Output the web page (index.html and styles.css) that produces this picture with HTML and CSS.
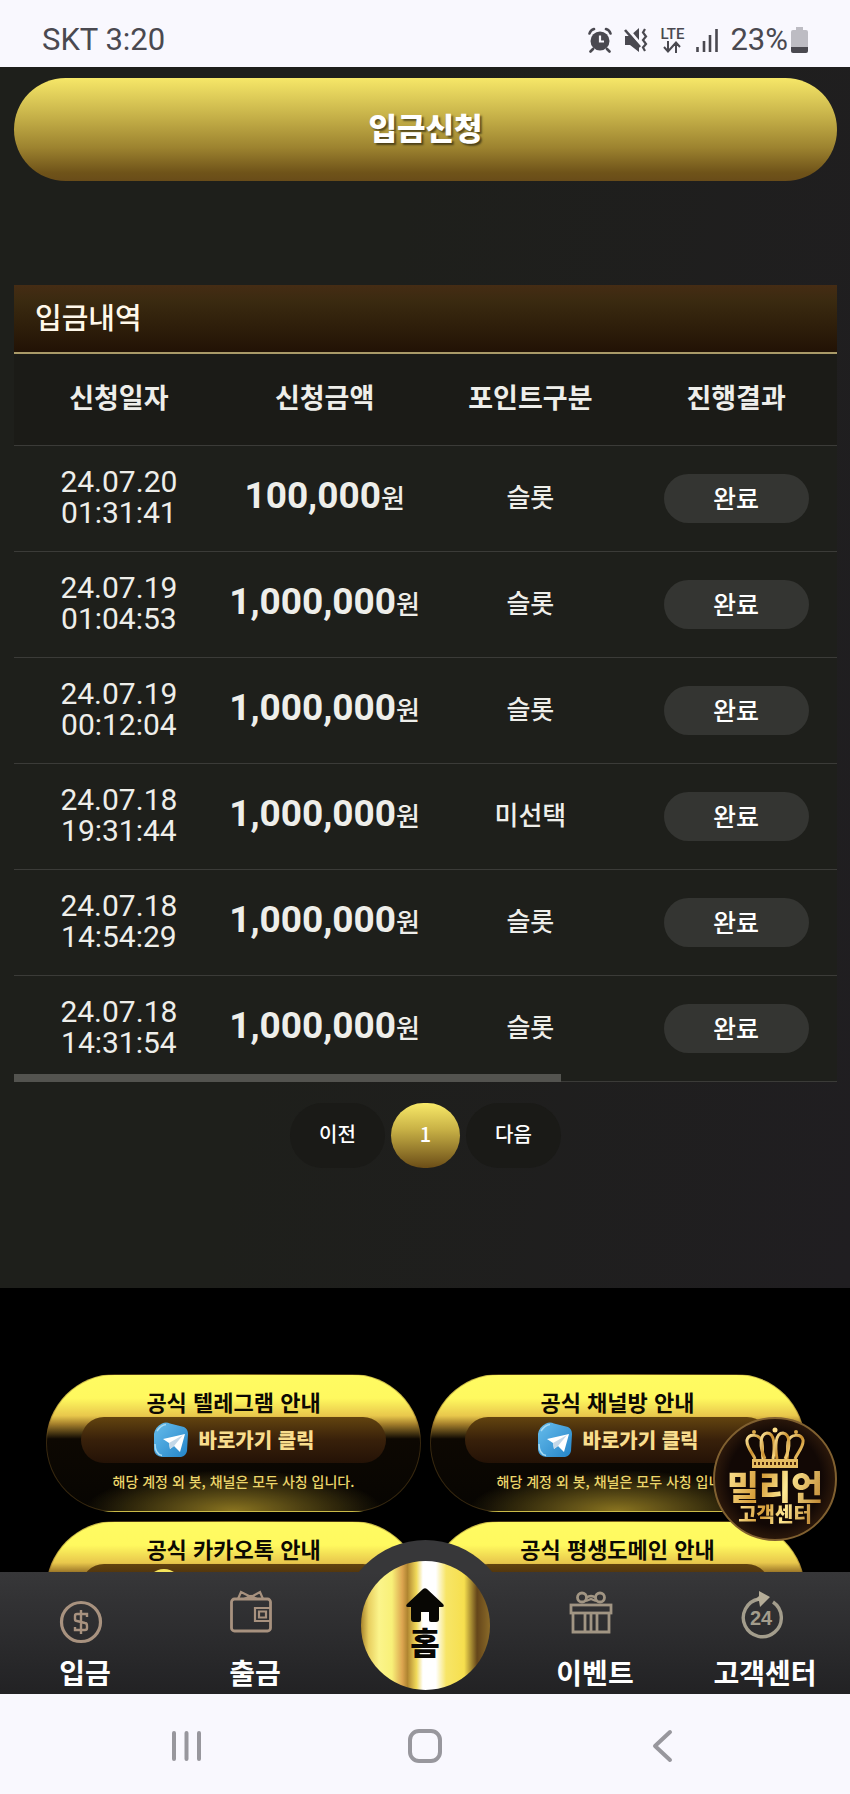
FILE: index.html
```html
<!DOCTYPE html>
<html lang="ko">
<head>
<meta charset="utf-8">
<meta name="viewport" content="width=device-width, initial-scale=1">
<title>입금신청</title>
<link rel="stylesheet" href="styles.css">
</head>
<body>
<svg class="defs" width="0" height="0" aria-hidden="true">
  <defs>
    <linearGradient id="tg" x1="0" y1="0" x2="1" y2="1"><stop offset="0" stop-color="#67bdec"/><stop offset="1" stop-color="#2484c8"/></linearGradient>
    <linearGradient id="gold" x1="0" y1="0" x2="1" y2="1"><stop offset="0" stop-color="#ffe9a0"/><stop offset=".5" stop-color="#c98f2e"/><stop offset="1" stop-color="#ffe08a"/></linearGradient>
    <symbol id="telegram" viewBox="0 0 36 36">
      <path d="M9 1.500Q13-.5 17 1.500L31 5Q35 7 35 12L34 29Q33 34 28 35L9 35Q2 34 1 28L1 12Q2 5 9 1.500Z" fill="url(#tg)"/>
      <path d="M2 22Q2 32 9 33.500M4 9Q8 3 13 2.500" fill="none" stroke="#a9dcf5" stroke-width="1.500"/>
      <path d="M10 17L32 12L27 30L21 24L17 27L16 21Z" fill="#fff"/>
      <path d="M16 21L30 13L21 24L17 27Z" fill="#c4d8e8"/>
    </symbol>
  </defs>
</svg>

<header class="status">
  <span class="status-text">SKT 3:20</span>
  <div class="status-icons">
    <svg width="24" height="26" viewBox="0 0 24 26" aria-hidden="true"><circle cx="12" cy="14" r="9.500" fill="#4a4950"/><path d="M1.500 6.500Q2.500 3 6 2M22.500 6.500Q21.500 3 18 2M5 22L2.500 24.500M19 22L21.500 24.500" stroke="#4a4950" stroke-width="2.600" stroke-linecap="round" fill="none"/><path d="M12 8.500V14.500H16" stroke="#f9f8fe" stroke-width="2.200" fill="none"/></svg>
    <svg width="25" height="26" viewBox="0 0 25 26" aria-hidden="true"><path d="M1 9H6L15 1V25L6 18H1Z" fill="#4a4950"/><path d="M2 0L18 19" stroke="#f9f8fe" stroke-width="3"/><path d="M1 3L16 20" stroke="#4a4950" stroke-width="2.600"/><path d="M21 2L19 5.500L22 9.500L19 13L22 17L19 20.500L21 24" stroke="#4a4950" stroke-width="2.200" fill="none"/></svg>
    <span class="lte">LTE<svg width="18" height="12" viewBox="0 0 18 12" aria-hidden="true"><path d="M5 0V10M1 6L5 10.500L9 6M13 12V2M9 6L13 1.500L17 6" fill="none" stroke="#4a4950" stroke-width="2"/></svg></span>
    <svg width="22" height="24" viewBox="0 0 22 24" aria-hidden="true"><path d="M1.500 19V24M8 13V24M14 7V24M20.500 1V24" stroke="#4a4950" stroke-width="2.600"/></svg>
    <span class="status-text battery">23%<svg width="17" height="26" viewBox="0 0 17 26" aria-hidden="true"><path d="M5 0H12V3H15Q17 3 17 5V20H0V5Q0 3 2 3H5Z" fill="#bdbcc3"/><path d="M0 20H17V24Q17 26 15 26H2Q0 26 0 24Z" fill="#4a4950"/></svg></span>
  </div>
</header>

<main class="content">
  <button class="submit" type="button">입금신청</button>

  <section class="history">
    <h1 class="history-title">입금내역</h1>
    <div class="table-wrap">
      <table class="table">
        <thead>
          <tr><th scope="col">신청일자</th><th scope="col">신청금액</th><th scope="col">포인트구분</th><th scope="col">진행결과</th></tr>
        </thead>
        <tbody>
          <tr><td class="date">24.07.20<br>01:31:41</td><td class="amount"><b>100,000</b>원</td><td>슬롯</td><td><span class="state">완료</span></td></tr>
          <tr><td class="date">24.07.19<br>01:04:53</td><td class="amount"><b>1,000,000</b>원</td><td>슬롯</td><td><span class="state">완료</span></td></tr>
          <tr><td class="date">24.07.19<br>00:12:04</td><td class="amount"><b>1,000,000</b>원</td><td>슬롯</td><td><span class="state">완료</span></td></tr>
          <tr><td class="date">24.07.18<br>19:31:44</td><td class="amount"><b>1,000,000</b>원</td><td>미선택</td><td><span class="state">완료</span></td></tr>
          <tr><td class="date">24.07.18<br>14:54:29</td><td class="amount"><b>1,000,000</b>원</td><td>슬롯</td><td><span class="state">완료</span></td></tr>
          <tr><td class="date">24.07.18<br>14:31:54</td><td class="amount"><b>1,000,000</b>원</td><td>슬롯</td><td><span class="state">완료</span></td></tr>
        </tbody>
      </table>
      <div class="scroll-thumb"></div>
    </div>
    <nav class="pager" aria-label="페이지">
      <button class="page" type="button">이전</button>
      <button class="page current" type="button">1</button>
      <button class="page" type="button">다음</button>
    </nav>
  </section>
</main>

<footer class="links">
  <a class="card" href="#telegram-guide">
    <span class="card-title">공식 텔레그램 안내</span>
    <span class="card-pill"><svg width="36" height="36" aria-hidden="true"><use href="#telegram"/></svg>바로가기 클릭</span>
    <span class="card-note">해당 계정 외 봇, 채널은 모두 사칭 입니다.</span>
  </a>
  <a class="card" href="#channel">
    <span class="card-title">공식 채널방 안내</span>
    <span class="card-pill"><svg width="36" height="36" aria-hidden="true"><use href="#telegram"/></svg>바로가기 클릭</span>
    <span class="card-note">해당 계정 외 봇, 채널은 모두 사칭 입니다.</span>
  </a>
  <a class="card" href="#kakao">
    <span class="card-title">공식 카카오톡 안내</span>
    <span class="card-pill kakao"><svg width="36" height="36" viewBox="0 0 36 36" aria-hidden="true"><ellipse cx="18" cy="19" rx="17" ry="16" fill="#f5e45c"/></svg></span>
  </a>
  <a class="card" href="#domain">
    <span class="card-title">공식 평생도메인 안내</span>
    <span class="card-pill"></span>
  </a>
</footer>

<a class="support" href="#support">
  <svg width="60" height="42" viewBox="0 0 60 42" aria-hidden="true"><g fill="none" stroke="url(#gold)" stroke-width="3"><path d="M10 32C8 26 1 20 2 13C4 6 15 7 17 15C18 21 17 27 18 32"/><path d="M50 32C52 26 59 20 58 13C56 6 45 7 43 15C42 21 43 27 42 32"/><path d="M20 32C14 19 15 7 22 6C30 6 30 20 28 32"/><path d="M40 32C46 19 45 7 38 6C30 6 30 20 32 32"/></g><circle cx="30" cy="3" r="2.500" fill="#ffe08a"/><circle cx="9" cy="5" r="2" fill="#dba94a"/><circle cx="51" cy="5" r="2" fill="#dba94a"/><path d="M7 32H53V41H7Z" fill="#e7bd62"/><path d="M9 36.500H51" stroke="#4a2508" stroke-width="3" stroke-dasharray="2 2"/></svg>
  <strong>밀리언</strong>
  <span>고객센터</span>
</a>

<div class="dock">
  <nav class="tabs" aria-label="메뉴">
    <a class="tab" href="#deposit"><svg class="low" width="44" height="44" viewBox="0 0 44 44" aria-hidden="true"><g fill="none" stroke="#a8927f"><circle cx="22" cy="22" r="19.500" stroke-width="3.200"/><path d="M28 17V14H18Q16 14 16 16V19Q16 21 18 21L26 23Q28 23 28 26V28Q28 30 26 30H16V27M22 10V34" stroke-width="2.400"/></g></svg><span>입금</span></a>
    <a class="tab" href="#withdraw"><svg width="44" height="44" viewBox="0 0 44 44" aria-hidden="true"><g fill="none" stroke="#a8927f" stroke-width="2.800"><rect x="2.500" y="9" width="39" height="32" rx="3"/><path d="M9 9L12 2L22 7L31 2L34 9M15 9L22 6L28 9" stroke-width="2.200"/><path d="M41 18H26V31H41M30 21.500H37V27.500H30Z" stroke-width="2.200"/></g></svg><span>출금</span></a>
    <a class="tab home" href="#home"><span class="home-disc"><svg width="40" height="34" viewBox="0 0 40 34" aria-hidden="true"><path d="M18 1Q20-.5 22 1L38 16Q40 19 37 19H34V31Q34 34 31 34H26Q24 34 24 32V24H16V32Q16 34 14 34H9Q6 34 6 31V19H3Q0 19 2 16Z" fill="#080704"/></svg><span>홈</span></span></a>
    <a class="tab" href="#event"><svg width="44" height="44" viewBox="0 0 44 44" aria-hidden="true"><g fill="none" stroke="#a19583" stroke-width="2.800"><rect x="2" y="15" width="40" height="8"/><path d="M4 23V42H40V23M16 23V42M22 23V42M28 23V42"/><circle cx="13" cy="7.500" r="4.500"/><circle cx="31" cy="7.500" r="4.500"/><path d="M17 8Q22 4 27 8M17 11L22 9L27 11" stroke-width="2.200"/></g></svg><span>이벤트</span></a>
    <a class="tab" href="#help"><svg width="44" height="50" viewBox="0 0 44 50" aria-hidden="true"><path d="M20 9A19 19 0 1 0 34 12" fill="none" stroke="#a39d8c" stroke-width="3.400"/><path d="M20 1L31 7L21 17L20 11L16 10L20 6Z" fill="#b5ad98"/><text class="icon-number" x="22" y="35" text-anchor="middle">24</text></svg><span>고객센터</span></a>
  </nav>
  <div class="system">
    <button type="button" aria-label="최근 앱"><svg width="34" height="34" viewBox="0 0 34 34"><path d="M4 4V30M16.500 4V30M29 4V30" stroke="#98979d" stroke-width="4" stroke-linecap="round"/></svg></button>
    <button type="button" aria-label="홈 화면"><svg width="34" height="34" viewBox="0 0 34 34"><rect x="2" y="2" width="30" height="30" rx="9" fill="none" stroke="#98979d" stroke-width="4"/></svg></button>
    <button type="button" aria-label="뒤로"><svg width="34" height="34" viewBox="0 0 34 34"><path d="M24 3L9 17L24 31" fill="none" stroke="#98979d" stroke-width="4" stroke-linecap="round" stroke-linejoin="round"/></svg></button>
  </div>
</div>
</body>
</html>
```
FILE: styles.css
```css
* { box-sizing: border-box; }

body {
  margin: 0;
  min-height: 100vh;
  display: flex;
  flex-direction: column;
  background: #000;
  color: #eeeeea;
  font-family: "Noto Sans CJK KR", sans-serif;
}

a { color: inherit; text-decoration: none; }
button { border: 0; padding: 0; font: inherit; color: inherit; cursor: pointer; }
svg { display: block; flex: none; }
.defs { position: absolute; }

/* status bar */
.status {
  display: flex;
  align-items: center;
  justify-content: space-between;
  height: 67px;
  padding: 13px 42px 0;
  background: #f9f8fe;
  color: #4a4950;
  font-family: Roboto, sans-serif;
}
.status-text { font-size: 31px; line-height: 36px; }
.status-icons { display: flex; align-items: center; gap: 12px; }
.lte {
  display: flex;
  flex-direction: column;
  align-items: center;
  font-size: 15px;
  font-weight: 500;
  line-height: 14px;
}
.battery { display: flex; align-items: center; gap: 3px; }

/* main */
.content {
  padding: 11px 13px 120px 14px;
  background: linear-gradient(100deg, #1e1f1b 40%, #201e21);
}
.submit {
  display: block;
  width: 100%;
  height: 103px;
  padding-bottom: 6px;
  border-radius: 52px;
  background: linear-gradient(#f6e768, #c5b048 38%, #9c822f 68%, #6f5319 92%, #694c19);
  color: #fff;
  font-size: 31px;
  font-weight: 900;
  text-shadow: 2px 2px 2px #0008;
}
.history { margin-top: 104px; }
.history-title {
  margin: 0;
  padding: 11px 21px 15px;
  border-bottom: 2px solid #a99a68;
  background: linear-gradient(#452c14, #3a2a10 25%, #221205);
  color: #fff8ea;
  font-size: 29px;
  font-weight: 500;
  line-height: 41px;
}
.table-wrap { position: relative; }
.table {
  width: 100%;
  table-layout: fixed;
  border-collapse: collapse;
  text-align: center;
  background: #1e1f1b;
}
.table th, .table td { padding: 0 0 5px 4px; border-bottom: 1px solid #3b3b38; }
.table th {
  height: 91px;
  background: #1b1b17;
  font-size: 27px;
  font-weight: 700;
}
.table td { height: 106px; font-size: 26px; font-weight: 500; }
.table .date {
  padding-bottom: 3px;
  font-family: Roboto, sans-serif;
  font-size: 30px;
  font-weight: 400;
  line-height: 31px;
}
.table .amount { padding-bottom: 3px; font-size: 26px; white-space: nowrap; line-height: 50px; }
.amount b { font-family: Roboto, sans-serif; font-size: 37px; font-weight: 700; }
.table td:last-child { padding-bottom: 0; }
.state {
  display: inline-block;
  width: 145px;
  padding-bottom: 3px;
  border-radius: 25px;
  background: #343532;
  color: #fff;
  font-size: 25px;
  line-height: 46px;
  vertical-align: middle;
}
.scroll-thumb {
  position: absolute;
  left: 0;
  bottom: 0;
  width: 66.5%;
  height: 8px;
  background: #53534f;
}
.pager { display: flex; justify-content: center; gap: 6px; margin-top: 21px; }
.page {
  width: 95px;
  height: 65px;
  padding-bottom: 3px;
  border-radius: 33px;
  background: #1a1a17;
  color: #fff;
  font-size: 20px;
  font-weight: 500;
}
.page.current { width: 69px; background: linear-gradient(#f8e968, #c9b246 40%, #6b4d17); }

/* banner links */
.links {
  flex: 1;
  display: grid;
  grid-template-columns: 1fr 1fr;
  gap: 9px;
  align-content: start;
  padding: 86px 45px 135px 46px;
}
.card {
  display: flex;
  flex-direction: column;
  align-items: center;
  min-height: 138px;
  padding: 10px 34px;
  border: 1px solid #7a5b2266;
  border-radius: 69px;
  background:
    radial-gradient(ellipse 40% 30% at 50% 100%, #8a7420, transparent),
    linear-gradient(#fffb62, #fff95f 17%, #e8c74c 30%, #a5802c 36%, #0d0802 47%, #070502);
}
.card-title { color: #0c0902; font-size: 22px; font-weight: 700; line-height: 32px; }
.card-pill {
  display: flex;
  align-items: center;
  justify-content: center;
  gap: 10px;
  width: 100%;
  height: 46px;
  border-radius: 23px;
  background: linear-gradient(#63440f, #38200a 50%, #241206);
  color: #f8dd8d;
  font-size: 20px;
  font-weight: 900;
}
.kakao { align-items: flex-start; padding-top: 2px; padding-right: 140px; }
.card-note { margin-top: 6px; color: #ecd66a; font-size: 14px; font-weight: 500; line-height: 24px; }

/* floating support badge */
.support {
  position: fixed;
  right: 13px;
  bottom: 253px;
  display: flex;
  flex-direction: column;
  align-items: center;
  width: 124px;
  height: 124px;
  padding-top: 8px;
  border: 2px solid #806030;
  border-radius: 50%;
  background: radial-gradient(circle, #120805 55%, #40250f 85%, #806030);
}
.support strong, .support span {
  background: linear-gradient(110deg, #ffe795, #d59c38 35%, #ffe993 60%, #bd8430);
  background-clip: text;
  -webkit-background-clip: text;
  color: transparent;
}
.support strong { font-size: 35px; font-weight: 900; line-height: 34px; }
.support span { font-size: 20px; font-weight: 900; line-height: 22px; }

/* bottom dock */
.dock { position: fixed; left: 0; right: 0; bottom: 0; }
.tabs {
  display: grid;
  grid-template-columns: repeat(5, 1fr);
  height: 122px;
  background: linear-gradient(#373739, #222224);
}
.tab {
  display: flex;
  flex-direction: column;
  align-items: center;
  justify-content: space-between;
  padding: 18px 0 6px;
  color: #fff;
  font-size: 28px;
  font-weight: 700;
  line-height: 32px;
}
.tab > svg { margin-right: 8px; }
.tab > .low { margin-top: 10px; }
.icon-number { fill: #a39d8c; font: 700 20px "Liberation Sans", sans-serif; }
.home { position: relative; }
.home-disc {
  position: absolute;
  bottom: -17px;
  display: flex;
  flex-direction: column;
  align-items: center;
  width: 171px;
  height: 171px;
  padding-top: 27px;
  border: 21px solid transparent;
  border-radius: 50%;
  background:
    linear-gradient(90deg, #a8842c, #e8cf60 6%, #fbf48b 14%, #f8f078 24%, #dca550 32%, #b08530 36%, #f0d95a 43%, #fff 48%, #fff 58%, #f7e567 66%, #f6df4e 80%, #64451a 90%, #8a6a28) padding-box,
    linear-gradient(#373739 19%, #222224 90%) border-box;
  color: #080704;
  font-size: 32px;
  font-weight: 900;
  line-height: 38px;
  clip-path: inset(0 0 17px);
}
.system {
  display: flex;
  justify-content: space-between;
  align-items: center;
  height: 100px;
  padding: 3px 170px 0;
  background: #f9f8fe;
}
.system button { background: none; }
```
